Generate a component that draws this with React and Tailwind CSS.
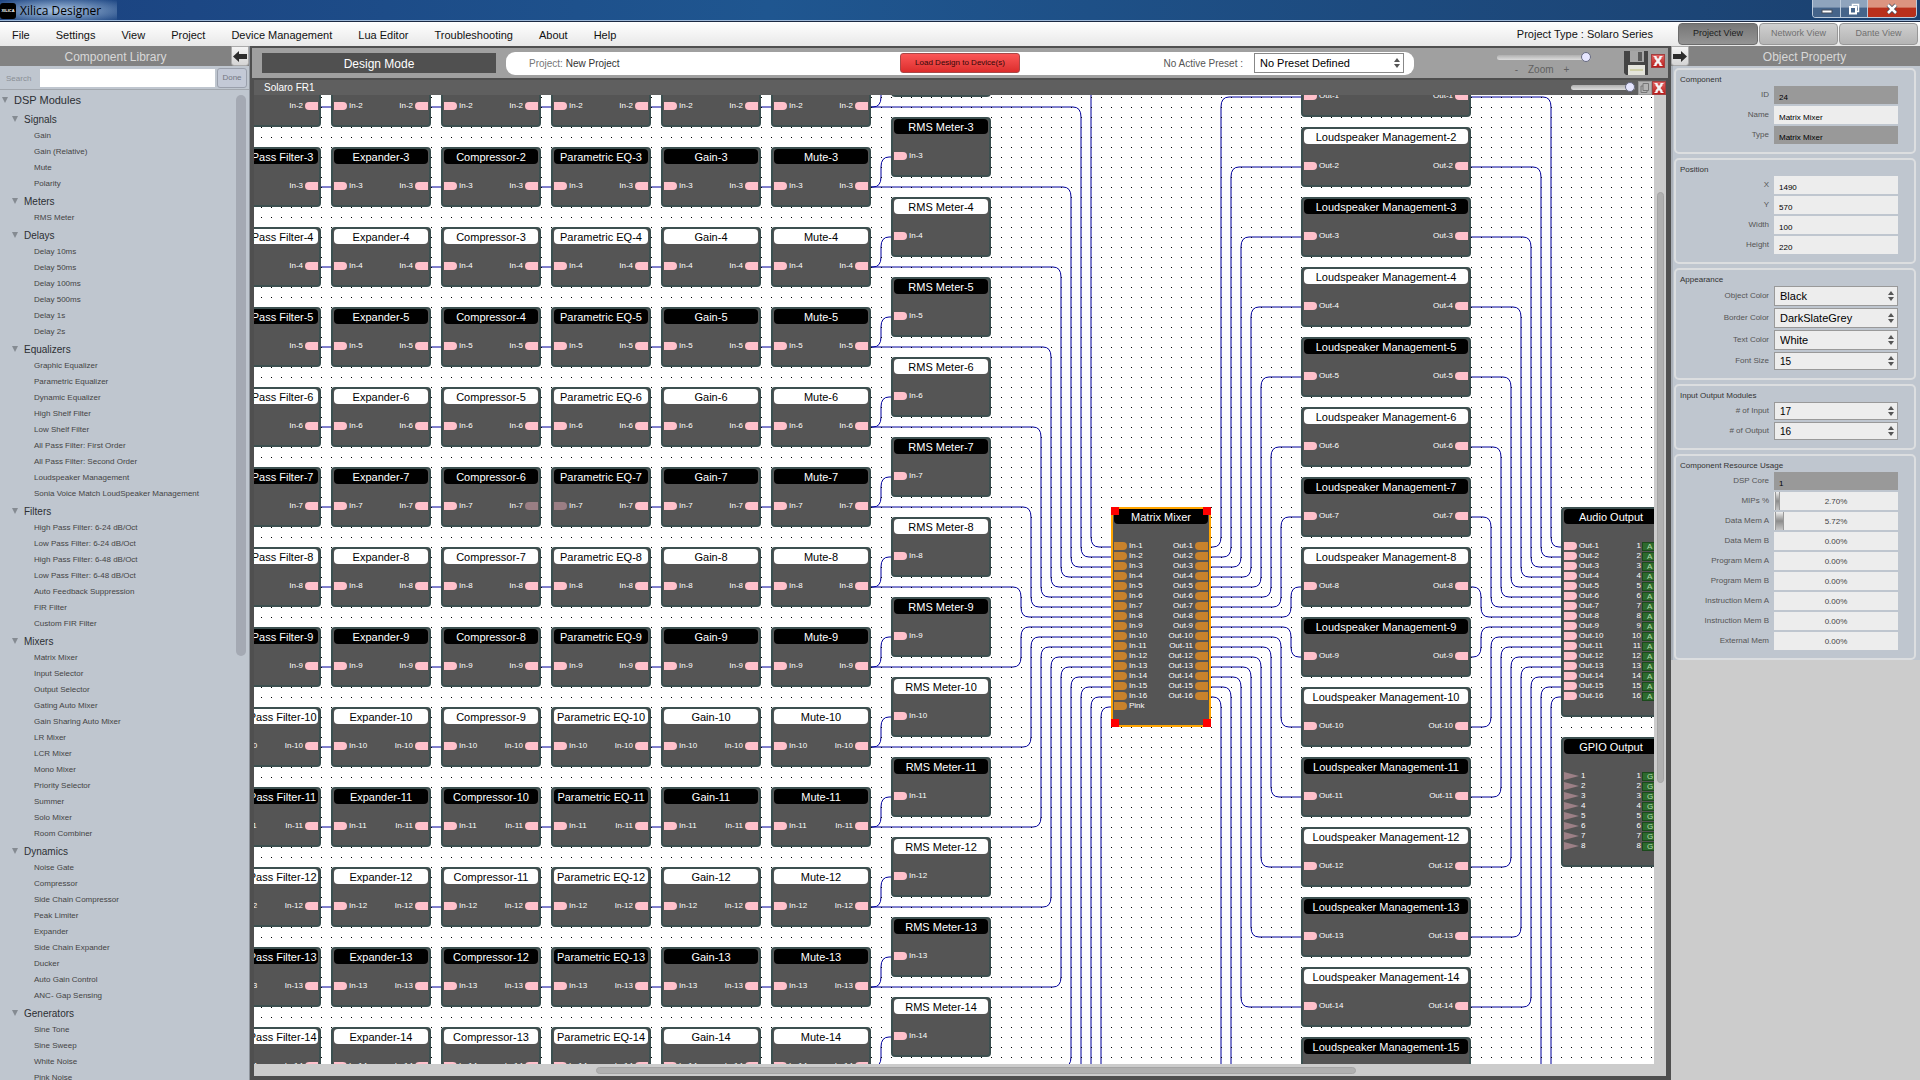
import React from 'react'

const MENU = ['File', 'Settings', 'View', 'Project', 'Device Management', 'Lua Editor', 'Troubleshooting', 'About', 'Help']

const LIBRARY = [
  { name: 'Signals', items: ['Gain', 'Gain (Relative)', 'Mute', 'Polarity'] },
  { name: 'Meters', items: ['RMS Meter'] },
  { name: 'Delays', items: ['Delay 10ms', 'Delay 50ms', 'Delay 100ms', 'Delay 500ms', 'Delay 1s', 'Delay 2s'] },
  {
    name: 'Equalizers',
    items: [
      'Graphic Equalizer', 'Parametric Equalizer', 'Dynamic Equalizer', 'High Shelf Filter', 'Low Shelf Filter',
      'All Pass Filter: First Order', 'All Pass Filter: Second Order', 'Loudspeaker Management',
      'Sonia Voice Match LoudSpeaker Management',
    ],
  },
  {
    name: 'Filters',
    items: [
      'High Pass Filter: 6-24 dB/Oct', 'Low Pass Filter: 6-24 dB/Oct', 'High Pass Filter: 6-48 dB/Oct',
      'Low Pass Filter: 6-48 dB/Oct', 'Auto Feedback Suppression', 'FIR Filter', 'Custom FIR Filter',
    ],
  },
  {
    name: 'Mixers',
    items: [
      'Matrix Mixer', 'Input Selector', 'Output Selector', 'Gating Auto Mixer', 'Gain Sharing Auto Mixer', 'LR Mixer',
      'LCR Mixer', 'Mono Mixer', 'Priority Selector', 'Summer', 'Solo Mixer', 'Room Combiner',
    ],
  },
  {
    name: 'Dynamics',
    items: [
      'Noise Gate', 'Compressor', 'Side Chain Compressor', 'Peak Limiter', 'Expander', 'Side Chain Expander',
      'Ducker', 'Auto Gain Control', 'ANC- Gap Sensing',
    ],
  },
  { name: 'Generators', items: ['Sine Tone', 'Sine Sweep', 'White Noise', 'Pink Noise'] },
]

const USAGE = [
  ['MIPs %', 2.7], ['Data Mem A', 5.72], ['Data Mem B', 0], ['Program Mem A', 0], ['Program Mem B', 0],
  ['Instruction Mem A', 0], ['Instruction Mem B', 0], ['External Mem', 0],
]

const range = (from, to) => Array.from({ length: to - from + 1 }, (_, i) => from + i)

/* ---------- diagram data, in canvas units (10 per grid step) ---------- */

const CHAIN = ['Low Pass Filter', 'Expander', 'Compressor', 'Parametric EQ', 'Gain', 'Mute']
const rowY = (n) => 80 * n - 80
const meterY = (n) => 80 * n - 110
const speakerY = (n) => 70 * n
const pinY = (n) => 550 + 10 * n

function buildNodes() {
  const nodes = []
  range(2, 14).forEach((n) => {
    CHAIN.forEach((name, col) => {
      const label = name === 'Compressor' ? n - 1 : n
      nodes.push({
        x: 170 + col * 110, y: rowY(n), w: 100, h: 60, dark: n % 2 === 1, title: `${name}-${label}`,
        pins: [{
          left: `In-${n}`, right: `In-${n}`,
          leftOff: n === 7 && name === 'Parametric EQ',
          rightOff: n === 7 && name === 'Compressor',
        }],
      })
    })
    nodes.push({ x: 840, y: meterY(n), w: 100, h: 60, dark: n % 2 === 1, title: `RMS Meter-${n}`, pins: [{ left: `In-${n}` }] })
  })
  range(1, 15).forEach((n) => {
    nodes.push({
      x: 1250, y: speakerY(n), w: 170, h: 60, dark: n % 2 === 1, title: `Loudspeaker Management-${n}`,
      pins: [{ left: `Out-${n}`, right: `Out-${n}` }],
    })
  })
  nodes.push({
    x: 1060, y: 520, w: 100, h: 220, dark: true, selected: true, title: 'Matrix Mixer',
    pins: [...range(1, 16).map((n) => ({ left: `In-${n}`, right: `Out-${n}` })), { left: 'Pink' }],
  })
  nodes.push({
    x: 1510, y: 520, w: 100, h: 210, dark: true, title: 'Audio Output',
    pins: range(1, 16).map((n) => ({ left: `Out-${n}`, num: n, tag: 'A' })),
  })
  nodes.push({
    x: 1510, y: 750, w: 100, h: 130, dark: true, title: 'GPIO Output',
    pins: range(1, 8).map((n) => ({ left: `${n}`, num: n, tag: 'G', arrow: true })),
  })
  return nodes
}

// horizontal - vertical - horizontal wire with rounded corners
function wire(x1, y1, mx, x2, y2) {
  if (y1 === y2) return `M${x1} ${y1}H${x2}`
  const s = y2 > y1 ? 1 : -1
  const tall = Math.min(10, Math.abs(y2 - y1) / 2)
  const a = Math.min(8, mx - x1)
  const b = Math.min(8, x2 - mx)
  return `M${x1} ${y1}H${mx - a}Q${mx} ${y1} ${mx} ${y1 + s * tall}V${y2 - s * tall}Q${mx} ${y2} ${mx + b} ${y2}H${x2}`
}

function buildWires() {
  const d = []
  range(1, 16).forEach((n) => {
    const y = rowY(n) + 40
    range(0, 4).forEach((c) => {
      if (!(n === 7 && c === 2)) d.push(`M${270 + c * 110} ${y}h10`)
    })
    d.push(wire(820, y, 830, 840, meterY(n) + 40))
    const step = n < 9 ? n - 1 : 16 - n
    d.push(wire(820, y, 1040 - 10 * step, 1060, pinY(n)))
    d.push(wire(1160, pinY(n), 1170 + 10 * step, 1250, speakerY(n) + 40))
    d.push(wire(1420, speakerY(n) + 40, 1500 - 10 * step, 1510, pinY(n)))
  })
  d.push(wire(820, 1400, 1050, 1060, pinY(17)))
  return d.join('')
}

const NODES = buildNodes()
const WIRES = buildWires()

/* ---------- canvas ---------- */

function Pin({ side, off, selected }) {
  const shape = side === 'left' ? 'rounded-r-[4px]' : 'rounded-l-[4px]'
  const color = selected ? 'bg-[#c8822c]' : off ? 'bg-[#9a7e84]' : 'bg-[#ffc0cb]'
  return <span className={`h-2 w-[13px] ${shape} ${color}`} />
}

function Node({ node }) {
  const { x, y, w, h, title, dark, selected, pins } = node
  return (
    <div
      className={`absolute border-2 bg-[#555] ${selected ? 'border-[#ffa500]' : 'rounded-[4px] border-[#3c5050]'}`}
      style={{ left: x, top: y, width: w, height: h }}
    >
      <div className={`mx-px h-[15px] rounded-[4px] text-center text-[11px] leading-4 whitespace-nowrap ${dark ? 'bg-black text-white' : 'bg-white text-black'}`}>
        {title}
      </div>
      <div className="mt-[17px] px-px">
        {pins.map((p, i) => (
          <div key={i} className="flex h-[10px] items-center justify-between text-[8px] leading-[10px] text-white">
            <span className="flex items-center gap-[2px]">
              {p.arrow
                ? <svg className="h-2 w-[15px]" viewBox="0 0 15 8"><path d="M0 0L15 4L0 8Z" fill="#9c8086" /></svg>
                : <Pin side="left" off={p.leftOff} selected={selected} />}
              {p.left}
            </span>
            {p.right && (
              <span className="flex items-center gap-[2px]">
                {p.right}
                <Pin side="right" off={p.rightOff} selected={selected} />
              </span>
            )}
            {p.tag && (
              <span className="flex items-center gap-px">
                {p.num}
                <span className="h-[9px] w-4 border border-[#1c4a1c] bg-[#2d6a2d] pl-1 leading-[8px] text-[#b0dcb0]">{p.tag}</span>
              </span>
            )}
          </div>
        ))}
      </div>
      {selected && (
        <>
          <span className="absolute -top-[2px] -left-[2px] size-2 bg-[#f00]" />
          <span className="absolute -top-[2px] -right-[2px] size-2 bg-[#f00]" />
          <span className="absolute -bottom-[2px] -left-[2px] size-2 bg-[#f00]" />
          <span className="absolute -right-[2px] -bottom-[2px] size-2 bg-[#f00]" />
        </>
      )}
    </div>
  )
}

function Canvas() {
  return (
    <div className="relative min-h-0 min-w-0 flex-1 overflow-hidden bg-white">
      {/* scrolled surface: its origin lies up and left of the visible part */}
      <div className="absolute -top-[108px] -left-[203px] h-[1600px] w-[2400px]">
        <svg className="absolute inset-0 size-full">
          <defs>
            <pattern id="grid" width="10" height="10" patternUnits="userSpaceOnUse">
              <rect width="1" height="1" fill="#000" />
            </pattern>
          </defs>
          <path d={WIRES} fill="none" stroke="#00009c" />
          <rect width="100%" height="100%" fill="url(#grid)" shapeRendering="crispEdges" />
        </svg>
        {NODES.map((n) => <Node key={n.title} node={n} />)}
      </div>
    </div>
  )
}

/* ---------- small parts ---------- */

function RedX({ label }) {
  return (
    <button aria-label={label} className="size-[14px] shrink-0 border border-[#a04040] bg-linear-to-b from-[#e06060] to-[#b81818]">
      <svg viewBox="0 0 12 12" className="size-3"><path d="M3 2L9 10M9 2L3 10" stroke="#f4f4f4" strokeWidth="2.4" /><path d="M1.500 1.500H4.500M7.500 1.500H10.500M1.500 10.500H4.500M7.500 10.500H10.500" stroke="#f4f4f4" /></svg>
    </button>
  )
}

function Slider({ label, size }) {
  return (
    <input
      type="range"
      aria-label={label}
      defaultValue="100"
      className={`${size} h-[10px] appearance-none bg-transparent [&::-webkit-slider-runnable-track]:h-[5px] [&::-webkit-slider-runnable-track]:rounded-full [&::-webkit-slider-runnable-track]:bg-linear-to-b [&::-webkit-slider-runnable-track]:from-[#b0b0b0] [&::-webkit-slider-runnable-track]:to-[#dcdcdc] [&::-webkit-slider-thumb]:-mt-[3px] [&::-webkit-slider-thumb]:size-[10px] [&::-webkit-slider-thumb]:appearance-none [&::-webkit-slider-thumb]:rounded-full [&::-webkit-slider-thumb]:border [&::-webkit-slider-thumb]:border-[#666a80] [&::-webkit-slider-thumb]:bg-[#e6e6ff]`}
    />
  )
}

function Arrows() {
  return (
    <svg viewBox="0 0 6 10" className="pointer-events-none absolute top-1/2 right-1 h-[10px] w-[6px] -translate-y-1/2">
      <path d="M0 4L3 0L6 4ZM0 6L3 10L6 6Z" fill="#555" />
    </svg>
  )
}

function Triangle() {
  return <svg viewBox="0 0 6 6" className="size-[6px]"><path d="M0 0H6L3 6Z" fill="#858b92" /></svg>
}

function ArrowButton({ label, flip }) {
  return (
    <button aria-label={label} className="flex h-5 w-[18px] shrink-0 items-center justify-center rounded-b-[3px] border border-[#aaa] bg-linear-to-b from-[#f4f4f4] to-[#d4d4d4]">
      <svg viewBox="0 0 14 11" className={`h-[11px] w-[14px] ${flip ? 'rotate-180' : ''}`}>
        <path d="M0 5.500L6 0V3H14V8H6V11Z" fill="#2c2c2c" />
      </svg>
    </button>
  )
}

/* ---------- top bars ---------- */

function TitleBar() {
  return (
    <div className="flex h-[22px] shrink-0 justify-between border-b border-[#1c2a44] bg-linear-to-r from-[#1b4280] via-[#1f5690] via-40% to-[#1b4170] pr-[3px] shadow-[inset_0_-1px_0_#9db8d8]">
      <div className="flex items-center bg-radial from-[#a9c3e0] to-transparent pr-4">
        <span className="flex size-4 items-center justify-center rounded-[3px] bg-black text-[4px] font-bold text-white">XILICA</span>
        <h1 className="pl-1 font-['Open_Sans','Noto_Sans',sans-serif] text-[12px] text-black">Xilica Designer</h1>
      </div>
      <div className="flex h-[18px] overflow-hidden rounded-b-[4px] border border-t-0 border-[#bccbdc] text-white">
        <button aria-label="Minimize" className="flex w-7 items-center justify-center border-r border-[#bccbdc] bg-linear-to-b from-[#8fa4bd] from-40% to-[#45648a] to-50%">
          <svg viewBox="0 0 12 12" className="size-3"><rect x="1" y="7" width="10" height="3" fill="#fff" stroke="#444c5c" /></svg>
        </button>
        <button aria-label="Restore" className="flex w-[27px] items-center justify-center border-r border-[#bccbdc] bg-linear-to-b from-[#8fa4bd] from-40% to-[#45648a] to-50%">
          <svg viewBox="0 0 12 12" className="size-3" fill="none"><path d="M4.500 3V1.500H10.500V8.500H9" stroke="#fff" strokeWidth="1.500" /><rect x="2" y="4" width="6" height="6.500" stroke="#fff" strokeWidth="2" /></svg>
        </button>
        <button aria-label="Close" className="flex w-12 items-center justify-center bg-linear-to-b from-[#dc9480] from-40% to-[#b8301c] to-50%">
          <svg viewBox="0 0 12 12" className="size-3"><path d="M2 2L10 10M10 2L2 10" stroke="#444c5c" strokeWidth="4" /><path d="M2 2L10 10M10 2L2 10" stroke="#fff" strokeWidth="2.500" /></svg>
        </button>
      </div>
    </div>
  )
}

function MenuBar() {
  const idle = 'border-[#989898] bg-linear-to-b from-[#cfcfcf] to-[#b4b4b4] text-[#707070]'
  return (
    <div className="flex h-6 shrink-0 items-center justify-between bg-linear-to-b from-white to-[#e8e8e8] pr-[2px] pl-3">
      <nav className="flex gap-[26px] pt-[2px] text-[11px] text-[#111]">
        {MENU.map((m) => <button key={m}>{m}</button>)}
      </nav>
      <div className="flex items-center">
        <span className="pr-[25px] text-[11px] text-[#111]">Project Type : Solaro Series</span>
        <div className="flex gap-px text-[9px]">
          <button className="h-[22px] w-20 rounded-[4px] border border-[#6c6c6c] bg-linear-to-b from-[#777] to-[#949494] text-[#1c1c1c]">Project View</button>
          <button className={`h-[22px] w-[79px] rounded-[4px] border ${idle}`}>Network View</button>
          <button className={`h-[22px] w-[79px] rounded-[4px] border ${idle}`}>Dante View</button>
        </div>
      </div>
    </div>
  )
}

/* ---------- left ---------- */

function ComponentLibrary() {
  return (
    <aside className="flex w-[250px] shrink-0 flex-col border-r border-[#8e949c] bg-[#bfc6cf] text-[#444]">
      <div className="flex h-5 shrink-0 bg-[#828282]">
        <h2 className="flex-1 text-center text-[12px] leading-[22px] text-[#d8d8d8]">Component Library</h2>
        <ArrowButton label="Collapse library" />
      </div>
      <div className="flex h-6 shrink-0 items-center gap-[2px] border-b border-[#a2a7ae] pr-[2px] pl-[6px]">
        <label htmlFor="search" className="w-8 pt-[2px] text-[8px] text-[#8a8f96]">Search</label>
        <input id="search" className="h-[18px] min-w-0 flex-1 bg-white px-1 text-[10px] outline-none" />
        <button className="h-5 w-[30px] rounded-[3px] border border-[#9aa0ac] bg-[#c3c9d6] text-[8px] text-[#737882]">Done</button>
      </div>
      <div className="flex min-h-0 flex-1">
        <div className="min-w-0 flex-1 overflow-hidden">
          <button className="flex h-5 items-center gap-[6px] pl-[2px] text-[11px] text-[#2c2f33]">
            <Triangle />DSP Modules
          </button>
          {LIBRARY.map((g) => (
            <section key={g.name}>
              <button className="flex h-[18px] items-center gap-[6px] pl-3 text-[10px] text-[#2c2f33]">
                <Triangle />{g.name}
              </button>
              <ul className="pl-[34px] text-[8px] leading-4">
                {g.items.map((i) => <li key={i} className="whitespace-nowrap">{i}</li>)}
              </ul>
            </section>
          ))}
        </div>
        <div className="w-[13px] pt-[5px]">
          <div className="h-[57%] w-[10px] rounded-full bg-[#a4a9b3]" />
        </div>
      </div>
    </aside>
  )
}

/* ---------- centre ---------- */

function Workspace() {
  return (
    <main className="flex min-w-0 flex-1 flex-col bg-[#4f4f4f] pt-[2px] pr-[3px] pb-1 pl-[2px]">
      <div className="flex h-[30px] shrink-0 items-center bg-[#a0a0a0] pl-[10px]">
        <h2 className="h-5 w-[234px] shrink-0 bg-[#505050] text-center text-[12px] leading-[22px] text-white">Design Mode</h2>
        <div className="ml-[10px] grid h-[23px] flex-1 grid-cols-[1fr_auto_1fr] items-center rounded-[9px] bg-white pr-[10px] pl-[23px] text-[10px] text-[#333]">
          <p><span className="text-[#777]">Project:</span> New Project</p>
          <button className="-ml-[13px] h-5 w-[120px] rounded-[3px] border border-[#a84848] bg-linear-to-b from-[#fb5656] to-[#dc2c2c] text-[8px] text-[#330808]">Load Design to Device(s)</button>
          <div className="flex items-center justify-end gap-[11px]">
            <label htmlFor="preset" className="text-[#555]">No Active Preset :</label>
            <span className="relative">
              <select id="preset" className="block h-5 w-[150px] appearance-none border border-[#888] bg-white pl-[5px] text-[11px] text-black">
                <option>No Preset Defined</option>
              </select>
              <Arrows />
            </span>
          </div>
        </div>
        <div className="flex w-[254px] shrink-0 items-start justify-end pr-[3px]">
          <div className="mt-[2px] flex flex-col items-center gap-[2px] text-[10px] leading-3 text-[#606060]">
            <Slider label="Zoom" size="w-[94px]" />
            <span className="flex gap-[10px] pr-1"><span>-</span>Zoom<span>+</span></span>
          </div>
          <button aria-label="Save" className="ml-8">
            <svg viewBox="0 0 26 26" className="size-[26px]">
              <path d="M1 1H25V25H3L1 23Z" fill="#444" />
              <rect x="7" y="1" width="14" height="11" fill="#a6a6a6" />
              <rect x="15" y="2" width="4" height="9" fill="#5a5a5a" />
              <rect x="5" y="15" width="17" height="10" fill="#e4e4dc" />
              <rect x="7" y="19" width="13" height="2" fill="#cfcfa8" />
            </svg>
          </button>
          <span className="ml-[2px]"><RedX label="Close project" /></span>
        </div>
      </div>
      <div className="mt-[2px] mr-[2px] ml-[2px] flex h-[15px] shrink-0 items-center bg-[#5f5f5f] pl-[10px]">
        <h3 className="flex-1 text-[10px] leading-[17px] text-white">Solaro FR1</h3>
        <Slider label="Device zoom" size="w-16" />
        <button aria-label="Detach" className="ml-[3px] size-[14px] border border-[#999] bg-[#b4b4b4]">
          <svg viewBox="0 0 12 12" className="size-3" fill="none"><path d="M4 1.500H9.500V8.500H4ZM4 4H2V10.500H8V9" stroke="#777" /></svg>
        </button>
        <RedX label="Close device" />
      </div>
      <div className="mr-[2px] ml-[2px] flex min-h-0 flex-1">
        <Canvas />
        <div className="w-3 shrink-0 bg-[#ccc]">
          <div className="h-[10%]" />
          <div className="mx-auto h-[61%] w-[7px] rounded-full border border-[#a4a4a4] bg-[#b0b0b0]" />
        </div>
      </div>
      <div className="mr-[2px] ml-[2px] flex h-3 shrink-0 items-center bg-[#ccc] pl-1">
        <div className="w-[24%]" />
        <div className="h-[7px] w-[54%] rounded-full border border-[#a4a4a4] bg-[#b0b0b0]" />
      </div>
    </main>
  )
}

/* ---------- right ---------- */

function Group({ title, children }) {
  return (
    <fieldset className="rounded-[5px] border-2 border-[#dcdee0] pr-4 pb-2 pl-1">
      <div className="h-4 text-[8px] leading-5 text-[#333]">{title}</div>
      <div className="flex flex-col gap-[2px]">{children}</div>
    </fieldset>
  )
}

function Row({ label, id, children }) {
  return (
    <div className="flex items-center justify-end gap-[5px]">
      <label htmlFor={id} className="text-[8px] text-[#555]">{label}</label>
      <div className="relative w-[124px]">{children}</div>
    </div>
  )
}

function TextRow({ label, value, locked }) {
  const id = `f-${label}`
  return (
    <Row label={label} id={id}>
      <input id={id} defaultValue={value} readOnly={locked} className={`block h-[18px] w-full pt-1 pl-[5px] text-[8px] text-black outline-none ${locked ? 'bg-[#999]' : 'bg-[#ededed]'}`} />
    </Row>
  )
}

function SelectRow({ label, value }) {
  const id = `f-${label}`
  return (
    <Row label={label} id={id}>
      <select id={id} className="block h-5 w-full appearance-none border border-[#999] bg-[#ededed] pl-[5px] text-[11px] text-black">
        <option>{value}</option>
      </select>
      <Arrows />
    </Row>
  )
}

function StepRow({ label, value }) {
  const id = `f-${label}`
  return (
    <Row label={label} id={id}>
      <input id={id} defaultValue={value} className="block h-[18px] w-full border border-[#999] bg-[#ededed] pl-[5px] text-[10px] text-black outline-none" />
      <Arrows />
    </Row>
  )
}

function UsageRow({ label, value }) {
  return (
    <Row label={label}>
      <div className="h-[18px] bg-[#ededed] text-center text-[8px] leading-5 text-[#444]">
        {value > 0 && (
          <span
            className="absolute inset-y-0 left-px border-x border-[#999] bg-linear-to-b from-[#f0f0f0] via-[#8c8c8c] to-[#c8c8c8]"
            style={{ width: `${value * 1.1 + 0.8}%` }}
          />
        )}
        {value.toFixed(2)}%
      </div>
    </Row>
  )
}

function ObjectProperty() {
  return (
    <aside className="flex w-[249px] shrink-0 flex-col bg-[#ccc]">
      <div className="flex h-5 shrink-0 bg-[#828282]">
        <ArrowButton label="Collapse properties" flip />
        <h2 className="flex-1 text-center text-[12px] leading-[22px] text-[#d8d8d8]">Object Property</h2>
      </div>
      <div className="flex flex-col gap-1 border-l-2 border-[#aab0b8] bg-[#bfc6cf] pt-[2px] pr-1 pl-px">
        <Group title="Component">
          <TextRow label="ID" value="24" locked />
          <TextRow label="Name" value="Matrix Mixer" />
          <TextRow label="Type" value="Matrix Mixer" locked />
        </Group>
        <Group title="Position">
          <TextRow label="X" value="1490" />
          <TextRow label="Y" value="570" />
          <TextRow label="Width" value="100" />
          <TextRow label="Height" value="220" />
        </Group>
        <Group title="Appearance">
          <SelectRow label="Object Color" value="Black" />
          <SelectRow label="Border Color" value="DarkSlateGrey" />
          <SelectRow label="Text Color" value="White" />
          <StepRow label="Font Size" value="15" />
        </Group>
        <Group title="Input Output Modules">
          <StepRow label="# of Input" value="17" />
          <StepRow label="# of Output" value="16" />
        </Group>
        <Group title="Component Resource Usage">
          <TextRow label="DSP Core" value="1" locked />
          {USAGE.map(([label, value]) => <UsageRow key={label} label={label} value={value} />)}
        </Group>
      </div>
    </aside>
  )
}

export default function App() {
  return (
    <div className="flex h-screen flex-col overflow-hidden font-['Liberation_Sans',Arial,sans-serif]">
      <TitleBar />
      <MenuBar />
      <div className="flex min-h-0 flex-1">
        <ComponentLibrary />
        <Workspace />
        <ObjectProperty />
      </div>
    </div>
  )
}
